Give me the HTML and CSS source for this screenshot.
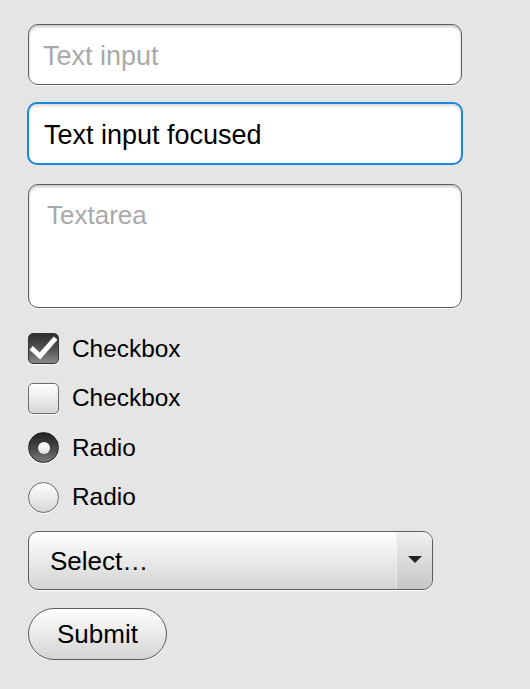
FILE: index.html
```html
<!DOCTYPE html>
<html lang="en">
<head>
<meta charset="utf-8">
<title>Form controls</title>
<link rel="stylesheet" href="styles.css">
</head>
<body>
<form class="form">
  <input class="field" type="text" placeholder="Text input">
  <input class="field field--focused" type="text" value="Text input focused">
  <textarea class="field field--area" placeholder="Textarea"></textarea>

  <div class="choices">
    <label class="choice">
      <span class="box box--checked">
        <svg viewBox="0 0 31 31" width="31" height="31"><path d="M5 16.5 L12 23 L26 7" fill="none" stroke="#fff" stroke-width="5" stroke-linecap="square" stroke-linejoin="miter"/></svg>
      </span>
      <span class="choice-label">Checkbox</span>
    </label>
    <label class="choice">
      <span class="box"></span>
      <span class="choice-label">Checkbox</span>
    </label>
    <label class="choice">
      <span class="radio radio--checked"><span class="radio-dot"></span></span>
      <span class="choice-label">Radio</span>
    </label>
    <label class="choice">
      <span class="radio"></span>
      <span class="choice-label">Radio</span>
    </label>
  </div>

  <div class="select">
    <span class="select-text">Select…</span>
    <span class="select-arrow">
      <svg viewBox="0 0 14 8" width="14" height="8"><path d="M0 0 H14 L7 7 Z" fill="#222"/></svg>
    </span>
  </div>

  <button class="submit" type="button">Submit</button>
</form>
</body>
</html>
```

FILE: styles.css
```css
html, body {
  margin: 0;
  padding: 0;
  background: #e5e5e5;
}

body {
  font-family: "Liberation Sans", Arial, Helvetica, sans-serif;
  color: #000;
}

.form {
  display: flex;
  flex-direction: column;
  align-items: flex-start;
  padding: 24px 0 0 28px;
}

.field {
  box-sizing: border-box;
  width: 434px;
  height: 61px;
  margin: 0 0 18px 0;
  padding: 4px 14px 0 14px;
  border: 1px solid #5c5c5c;
  border-radius: 10px;
  background: #fff;
  font-family: inherit;
  font-size: 27px;
  color: #000;
  outline: none;
  box-shadow: inset 0 2px 3px rgba(0, 0, 0, 0.22), 0 1px 1px rgba(255, 255, 255, 0.9);
}

.field::placeholder {
  color: #a9a9a9;
}

.field--focused {
  width: 436px;
  height: 63px;
  margin: -1px 0 18px -1px;
  padding: 3px 15px 0 15px;
  border: 2px solid #1a86e0;
  box-shadow: inset 0 2px 3px rgba(0, 0, 0, 0.15);
}

.field--area {
  height: 124px;
  margin-top: 1px;
  padding: 14px 18px;
  resize: none;
  line-height: 32px;
  font-size: 26px;
}

.choices {
  display: flex;
  flex-direction: column;
  gap: 18.5px;
  margin: 7px 0 19px 0;
}

.choice {
  display: flex;
  align-items: center;
  height: 31px;
}

.choice-label {
  font-size: 24.4px;
  margin-left: 13px;
}

.box {
  box-sizing: border-box;
  width: 31px;
  height: 31px;
  border: 1px solid #6a6a6a;
  border-radius: 5px;
  background: linear-gradient(#ffffff, #d6d6d6);
  box-shadow: 0 1px 1px rgba(255, 255, 255, 0.9);
  display: flex;
}

.box svg {
  margin: -1px;
}

.box--checked {
  border-color: #333;
  background: linear-gradient(#2e2e2e, #5a5a5a 60%, #8a8a8a);
}

.radio {
  box-sizing: border-box;
  width: 31px;
  height: 31px;
  border: 1px solid #6a6a6a;
  border-radius: 50%;
  background: linear-gradient(#ffffff, #d6d6d6);
  box-shadow: 0 1px 1px rgba(255, 255, 255, 0.9);
  display: flex;
  align-items: center;
  justify-content: center;
}

.radio--checked {
  border-color: #222;
  background: linear-gradient(#222, #4a4a4a 55%, #7c7c7c);
}

.radio-dot {
  width: 12px;
  height: 12px;
  border-radius: 50%;
  background: linear-gradient(#ffffff, #e2e2e2);
}

.select {
  box-sizing: border-box;
  width: 405px;
  height: 59px;
  margin: -1px 0 18px 0;
  display: flex;
  align-items: stretch;
  border: 1px solid #5c5c5c;
  border-radius: 10px;
  background: linear-gradient(#ffffff, #d4d4d4);
  box-shadow: 0 1px 1px rgba(255, 255, 255, 0.9);
  overflow: hidden;
}

.select-text {
  flex: 1;
  display: flex;
  align-items: center;
  padding: 3px 0 0 21px;
  font-size: 26px;
}

.select-arrow {
  width: 35px;
  display: flex;
  align-items: center;
  justify-content: center;
  border-left: 1px solid rgba(255, 255, 255, 0.5);
  background: linear-gradient(#f0f0f0, #c6c6c6);
}

.submit {
  box-sizing: border-box;
  width: 139px;
  height: 52px;
  padding: 2px 0 0 0;
  border: 1px solid #5c5c5c;
  border-radius: 26px;
  background: linear-gradient(#ffffff, #d4d4d4);
  box-shadow: 0 1px 1px rgba(255, 255, 255, 0.9);
  font-family: inherit;
  font-size: 26px;
  color: #000;
}
```
